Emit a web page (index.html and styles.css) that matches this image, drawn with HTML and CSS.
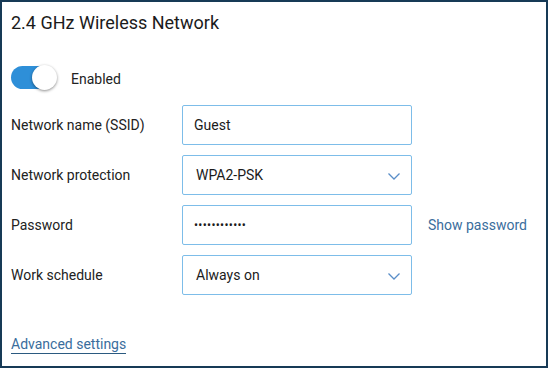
FILE: index.html
```html
<!DOCTYPE html>
<html lang="en">
<head>
    <meta charset="UTF-8">
    <meta name="viewport" content="width=device-width, initial-scale=1.0">
    <title>Wireless</title>
    <link rel="stylesheet" href="styles.css">
</head>
<body>

    <div class="panel">
        <h2 class="panel-title">2.4 GHz Wireless Network</h2>

        <label class="switch-row">
            <span class="switch"><span class="switch-knob"></span></span>
            <span class="switch-text">Enabled</span>
        </label>

        <div class="form-row">
            <label class="form-label" for="ssid">Network name (SSID)</label>
            <input class="field" type="text" id="ssid" value="Guest">
        </div>
        <div class="form-row">
            <span class="form-label">Network protection</span>
            <div class="field select">
                <span>WPA2-PSK</span>
                <svg class="chevron" width="12" height="7" viewBox="0 0 12 7"><path d="M0.5 0.5 L6 6 L11.5 0.5" fill="none" stroke="#5a8ec8" stroke-width="1.3"/></svg>
            </div>
        </div>
        <div class="form-row">
            <label class="form-label" for="password">Password</label>
            <input class="field password" type="password" id="password" value="guestguest12">
            <a class="link show-pass" href="#">Show password</a>
        </div>
        <div class="form-row">
            <span class="form-label">Work schedule</span>
            <div class="field select">
                <span>Always on</span>
                <svg class="chevron" width="12" height="7" viewBox="0 0 12 7"><path d="M0.5 0.5 L6 6 L11.5 0.5" fill="none" stroke="#5a8ec8" stroke-width="1.3"/></svg>
            </div>
        </div>

        <a class="link advanced" href="#">Advanced settings</a>
    </div>

</body>
</html>
```

FILE: styles.css
```css
html, body {
    margin: 0;
    padding: 0;
}
body {
    font-family: Roboto, "Liberation Sans", sans-serif;
    font-size: 14px;
    color: #222;
    background: #fff;
}
.panel {
    box-sizing: border-box;
    width: 548px;
    height: 368px;
    border: 2px solid #173a56;
    padding: 9px 9px 0 9px;
}
.panel-title {
    margin: 0;
    font-size: 18px;
    font-weight: 400;
    line-height: 24px;
    color: #1b1b1b;
}
.switch-row {
    display: flex;
    align-items: center;
    gap: 15px;
    margin-top: 30px;
    height: 24px;
    cursor: pointer;
}
.switch-text {
    padding-top: 3px;
}
.switch {
    position: relative;
    width: 45px;
    height: 23px;
    border-radius: 12px;
    background: #2e8fd8;
}
.switch-knob {
    position: absolute;
    top: -1px;
    right: -1px;
    width: 25px;
    height: 25px;
    border-radius: 50%;
    background: #fff;
    box-shadow: 0 1px 3px rgba(0, 0, 0, 0.45);
}
.form-row {
    display: flex;
    align-items: center;
    height: 40px;
    margin-top: 10px;
}
.switch-row + .form-row {
    margin-top: 16px;
}
.form-label {
    width: 171px;
    flex-shrink: 0;
}
.field {
    box-sizing: border-box;
    width: 230px;
    height: 40px;
    border: 1px solid #7dbde9;
    border-radius: 2px;
    padding: 0 11px;
    font-family: inherit;
    font-size: 14px;
    color: #1b1b1b;
    background: #fff;
    outline: none;
}
.password {
    font-size: 12px;
    letter-spacing: 0.3px;
}
.select {
    display: flex;
    align-items: center;
    justify-content: space-between;
    padding: 0 11px 0 13px;
    cursor: pointer;
}
.chevron {
    margin-top: 2px;
}
.link {
    color: #3a6d9c;
    text-decoration: none;
}
.show-pass {
    margin-left: 16px;
}
.advanced {
    display: inline-block;
    margin-top: 40px;
    line-height: 18px;
    border-bottom: 1px solid #2b5a80;
}
```
